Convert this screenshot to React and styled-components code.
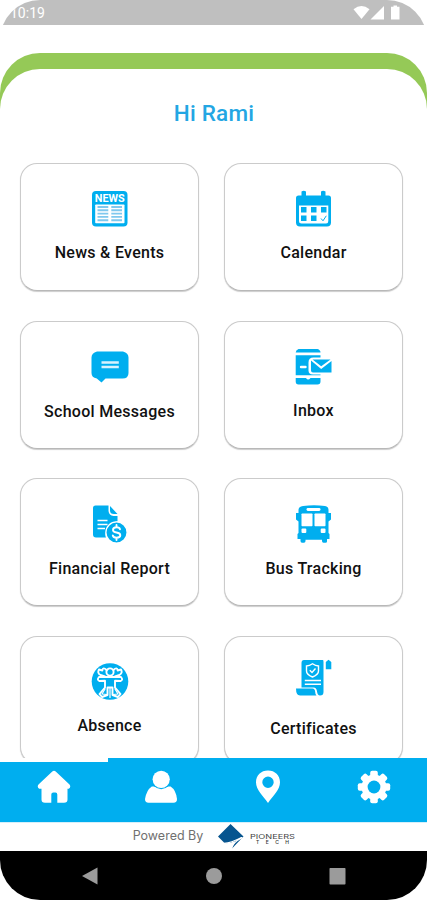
import styled, { createGlobalStyle } from "styled-components";

const blue = "#00aeef";

export default function App() {
  return (
    <>
      <GlobalStyle />
      <Phone>
        <StatusBar>
          <span>10:19</span>
          <StatusIcons />
        </StatusBar>
        <Backdrop>
          <Sheet>
            <Greeting>Hi Rami</Greeting>
            <Grid>
              {cards.map(({ label, Icon, iconTop, labelTop }) => (
                <Card key={label} $top={iconTop}>
                  <Icon />
                  <Label $top={labelTop}>{label}</Label>
                </Card>
              ))}
            </Grid>
          </Sheet>
        </Backdrop>
        <TabBar>
          <Tab $active><HomeIcon /></Tab>
          <Tab><UserIcon /></Tab>
          <Tab><PinIcon /></Tab>
          <Tab><GearIcon /></Tab>
        </TabBar>
        <Powered>
          <span>Powered By</span>
          <PioneersLogo />
        </Powered>
        <SystemBar>
          <SystemIcon viewBox="0 0 18 18"><path d="M1 9 16.5 0.5V17.5Z" /></SystemIcon>
          <SystemIcon viewBox="0 0 18 18"><circle cx="9" cy="9" r="8" /></SystemIcon>
          <SystemIcon viewBox="0 0 18 18"><rect x="0.5" y="1" width="16" height="16.5" rx="0.8" /></SystemIcon>
        </SystemBar>
      </Phone>
    </>
  );
}

const StatusIcons = () => (
  <svg width="48" height="16" viewBox="0 0 48 16" fill="#fff">
    <path d="M0.5 4.2Q8.500-2 16.500 4.200L8.500 14Z" />
    <path d="M17.500 14.500 31 1V14.500Z" />
    <path d="M38 1.800H40.500V0.500H44V1.800H46.500V14.500H38Z" />
  </svg>
);

// card icons share a 40x40 box

const NewsIcon = () => (
  <CardIcon viewBox="0 0 40 40">
    <rect x="2" y="2" width="35.500" height="35.500" rx="4" />
    <text x="4.800" y="13" textLength="30" lengthAdjust="spacingAndGlyphs" fill="#fff" fontFamily="Roboto, sans-serif" fontWeight="700" fontSize="11.500">NEWS</text>
    <rect x="5.200" y="15.500" width="29.300" height="18.800" rx="0.800" fill="#fff" />
    <path stroke="#7fc8ee" strokeWidth="1.900" d="M7.500 18H18.300M7.500 21.300H18.300M7.500 24.600H18.300M7.500 27.900H18.300M7.500 31.200H18.300M21.300 18H32M21.300 21.300H32M21.300 24.600H32M21.300 27.900H32M21.300 31.200H32" />
  </CardIcon>
);

const CalendarIcon = () => (
  <CardIcon viewBox="0 0 40 40">
    <path d="M7.500 2.500Q9.700 1 12 2.500V6.500H27V2.500Q29 1 31.500 2.500V6.500H34.500Q37 6.500 37 9V33.500Q37 37.500 33 37.500H6Q2 37.500 2 33.500V9Q2 6.500 4.500 6.500H7.500Z" />
    <path fill="#fff" d="M5 16.500H34.300V32Q34.300 34.500 32 34.500H7.500Q5 34.500 5 32Z" />
    <path d="M7 18h5.500v5.500h-5.500zM17 18h5.500v5.500h-5.500zM27 18h5.500v5.500h-5.500zM7 26.500h5.500v5.500h-5.500zM17 26.500h5.500v5.500h-5.500z" />
    <path fill="none" stroke={blue} strokeWidth="1" d="M27 29.500 29 31.800 32.300 26.800" />
  </CardIcon>
);

const MessageIcon = () => (
  <CardIcon viewBox="0 0 40 40">
    <path d="M7 4.500H33Q38.500 6 38.500 10.500V26Q38.500 31.500 32.500 31.500H15.500L11.500 35.500 6.800 31.500Q1.500 30.500 1.500 26V10.500Q1.500 6 7 4.500Z" />
    <path stroke="#d7f2fe" strokeWidth="2.600" d="M11.500 15.500H28.800M11.500 20H28.800" />
  </CardIcon>
);

const InboxIcon = () => (
  <CardIcon viewBox="0 0 40 40">
    <path d="M4.500 2H23.500Q26.500 3 26.500 5.500H1.700Q1.700 3 4.500 2ZM1.700 8.300H26.500V10.500H19.500Q14.500 10.500 14.500 15.500V23.500Q14.500 27.500 19 27.500H26.500V28.300H1.700ZM1.700 31H12Q14 34 16.500 31H26.500V34.500Q26.500 37.500 23.500 37.500H4.500Q1.700 37.500 1.700 34.500Z" />
    <path stroke="#fff" strokeWidth="2.400" strokeLinecap="round" d="M7 20H11.500" />
    <path d="M18.500 12.500H36.500L27.200 19.200ZM17 13.500 27.200 22 37.500 14V25.500H19Q17 25.500 17 23.500Z" />
  </CardIcon>
);

const FinanceIcon = () => (
  <CardIcon viewBox="0 0 40 40">
    <path d="M5.500 1.500H18.500V7Q19 11.500 23.500 12H27.500V17.200Q16.500 18.500 15.500 29.500 15.300 33.500 16.300 33.500H6Q3 33.500 3 30.500V4Q3 1.500 5.500 1.500ZM20 2 27.500 10H24Q20 10 20 6.500Z" />
    <path stroke="#fff" strokeWidth="1.400" d="M7.500 16.500H17.500M7.500 20.500H17.500M7.500 24.500H15" />
    <circle cx="26.500" cy="28.500" r="10.600" stroke="#fff" strokeWidth="1.300" />
    <path fill="none" stroke="#fff" strokeWidth="1.900" strokeLinecap="round" d="M30 25.300Q29.500 23.300 26.500 23.300 23 23.300 23 25.900 23 28 26.500 28.500 30.300 29 30.300 31.300 30.300 33.700 26.500 33.700 23.300 33.700 22.800 31.500M26.500 21V23.300M26.500 33.700V36" />
  </CardIcon>
);

const BusIcon = () => (
  <CardIcon viewBox="0 0 40 40">
    <path d="M9 2Q20 0.500 31 2 34.500 2.500 34.500 6V9H37V15.500L34.500 17.500V29L35.500 30V35H33V37.500Q33 38.700 31.500 38.700H29.500Q28 38.700 28 37V35.800H11.500V37Q11.500 38.700 10 38.700H8Q6.500 38.700 6.500 37V35H3.500V30L4.500 29V17.500L2 15.500V9H4.500V6Q4.500 2.500 9 2Z" />
    <g fill="#fff">
      <rect x="12.500" y="4" width="14" height="2.900" rx="1.400" />
      <rect x="7.500" y="9.500" width="11" height="12.800" rx="0.700" />
      <rect x="20.500" y="9.500" width="11" height="12.800" rx="0.700" />
      <rect x="7.500" y="24.500" width="4.800" height="4.500" rx="1" />
      <rect x="26.700" y="24.500" width="4.800" height="4.500" rx="1" />
    </g>
  </CardIcon>
);

const AbsenceIcon = () => (
  <CardIcon viewBox="0 0 40 40">
    <circle cx="20" cy="19.500" r="18.300" />
    <g fill="none" stroke="#fff" strokeWidth="1.900" strokeLinecap="round" strokeLinejoin="round">
      <circle cx="20" cy="10" r="3.600" />
      <path d="M16.500 8Q13 4.500 12.300 8.500L9 7.500Q7 11 10.500 13L15 14.500M23.500 8Q27 4.500 27.700 8.500L31 7.500Q33 11 29.500 13L25 14.500" />
      <path d="M9 15H31Q33.500 18 30.500 19L25 18.700V25.500L30.500 32 28 35 22.500 33V25.500H17.500V33L12 35 9.500 32 15 25.500V18.700L9.500 19Q6.500 18 9 15Z" />
      <path d="M15 27 12 32 17 32.500M25 27 28 32 23 32.500M20 25.500V35.500" strokeWidth="1.200" />
    </g>
  </CardIcon>
);

const CertificateIcon = () => (
  <CardIcon viewBox="0 0 40 40">
    <path d="M10 2H29.500V34Q29.500 37.500 26 37.500 23.500 37.500 23 33.500 22.500 29.500 19.500 29.500H7.500V5Q7.500 2 10 2ZM2 30.500H18.500Q21 30.500 21.200 34 21.200 36.500 22.500 37.500H6Q2 37.500 2 30.500ZM31.800 4 34.500 1.800 37.300 4V11.200H31.800Z" />
    <path fill="#fff" d="M29.500 2H31V3.200H29.500Z" />
    <g fill="none" stroke="#fff" strokeWidth="1.400">
      <path d="M18.500 5.800Q21.500 8 24.500 8V13Q24.500 16.500 18.500 19 12.500 16.500 12.500 13V8Q15.500 8 18.500 5.800Z" />
      <path d="M15.800 12.300 18 14.400 21.500 10.500" />
      <path d="M10.800 22.500H27M10.800 26.300H27" />
    </g>
  </CardIcon>
);

const HomeIcon = () => (
  <TabIcon viewBox="0 0 34 34">
    <path d="M15.300 1.500Q17 0.200 18.700 1.500L32.500 14.500Q34.300 17 31.800 18.800H30.500V29.500Q30.500 32.800 27 32.800H20.300V24.500Q20.300 22.500 18.500 22.500H16.300Q14.300 22.500 14.300 24.500V32.800H8Q4.500 32.800 4.500 29.500V18.800H2.200Q-0.300 17 1.500 14.500Z" />
  </TabIcon>
);

const UserIcon = () => (
  <TabIcon viewBox="0 0 34 34">
    <path d="M7.800 16.500H26.600Q32 20 33 29 33 32.800 29.500 32.800H4.500Q1 32.800 1 29 2.500 20 7.800 16.500Z" />
    <circle cx="17.200" cy="9.300" r="9.900" fill={blue} />
    <circle cx="17.200" cy="9.300" r="8.600" />
  </TabIcon>
);

const PinIcon = () => (
  <TabIcon viewBox="0 0 34 34">
    <path fillRule="evenodd" d="M17 0.600C24 0.600 29 5.500 29 12.300 29 20 22 26 17 33 12 26 5 20 5 12.300 5 5.500 10 0.600 17 0.600ZM17 6.600A5.700 5.700 0 1 0 17 18A5.700 5.700 0 1 0 17 6.600Z" />
  </TabIcon>
);

const GearIcon = () => (
  <TabIcon viewBox="0 0 34 34">
    {[0, 45, 90, 135].map((angle) => (
      <rect key={angle} x="13.200" y="0.800" width="7.600" height="32.400" rx="2" transform={`rotate(${angle} 17 17)`} />
    ))}
    <circle cx="17" cy="17" r="12.500" />
    <circle cx="17" cy="17" r="6.400" fill={blue} />
  </TabIcon>
);

const PioneersLogo = () => (
  <svg width="80" height="28" viewBox="0 0 80 28">
    <path fill="#07558f" d="M12.500 1 25.500 13.500 14 25.500 17.500 18 13 19.500 7 20.500 0 13.500Z" />
    <path fill="none" stroke="#fff" strokeWidth="1.300" d="M6 20.500Q13 20 23.500 14.500M13 26Q14.500 19.500 24.500 14.500" />
    <text x="32" y="15.500" textLength="45" lengthAdjust="spacingAndGlyphs" fontFamily="Inter, sans-serif" fontSize="6.500" fill="#444">PIONEERS</text>
    <text x="38" y="21" textLength="33" fontFamily="Inter, sans-serif" fontSize="5" fontWeight="500" fill="#333">TECH</text>
  </svg>
);

const cards = [
  { label: "News & Events", Icon: NewsIcon, iconTop: 25, labelTop: 14 },
  { label: "Calendar", Icon: CalendarIcon, iconTop: 25, labelTop: 14 },
  { label: "School Messages", Icon: MessageIcon, iconTop: 25, labelTop: 15 },
  { label: "Inbox", Icon: InboxIcon, iconTop: 25, labelTop: 14 },
  { label: "Financial Report", Icon: FinanceIcon, iconTop: 25, labelTop: 15 },
  { label: "Bus Tracking", Icon: BusIcon, iconTop: 25, labelTop: 15 },
  { label: "Absence", Icon: AbsenceIcon, iconTop: 25, labelTop: 14 },
  { label: "Certificates", Icon: CertificateIcon, iconTop: 21, labelTop: 21 }
];

const GlobalStyle = createGlobalStyle`
  * {
    box-sizing: border-box;
  }
  body {
    margin: 0;
    background: #fff;
    font-family: Roboto, sans-serif;
  }
  svg {
    display: block;
    flex-shrink: 0;
  }
`;

const Phone = styled.div`
  width: 427px;
  height: 900px;
  display: flex;
  flex-direction: column;
  overflow: hidden;
  border-radius: 40px;
  background: #fff;
`;

const StatusBar = styled.header`
  height: 25px;
  flex-shrink: 0;
  display: flex;
  justify-content: space-between;
  padding: 5px 26px 0 10px;
  background: #bfbfbf;
  color: #fff;
  font-size: 14px;
  line-height: 17px;
`;

const Backdrop = styled.main`
  height: 705px;
  flex-shrink: 0;
  margin-top: 28px;
  padding-top: 16px;
  overflow: hidden;
  border-radius: 40px 40px 0 0;
  background: #95c957;
`;

const Sheet = styled.section`
  height: 689px;
  padding: 30px 24px 0 20px;
  border-radius: 40px 40px 0 0;
  background: #fff;
`;

const Greeting = styled.h1`
  margin: 0 0 36px;
  padding-left: 5px;
  color: #23a6e3;
  font-size: 22.5px;
  font-weight: 500;
  line-height: 28px;
  letter-spacing: 0.2px;
  text-align: center;
`;

const Grid = styled.div`
  display: grid;
  grid-template-columns: 179px 179px;
  grid-auto-rows: 128px;
  gap: 29.5px 25px;
`;

const Card = styled.article`
  display: flex;
  flex-direction: column;
  align-items: center;
  padding-top: ${(props) => props.$top}px;
  border: 1px solid #cbcbcb;
  border-bottom-color: #b8b8b8;
  border-radius: 17px;
  background: #fff;
  box-shadow: 0 1px 1px rgba(0, 0, 0, 0.2);
`;

const CardIcon = styled.svg`
  width: 40px;
  height: 40px;
  fill: ${blue};
`;

const Label = styled.span`
  margin-top: ${(props) => props.$top}px;
  color: #111;
  font-size: 16px;
  font-weight: 500;
  line-height: 20px;
  letter-spacing: 0.28px;
  white-space: nowrap;
`;

const TabBar = styled.nav`
  height: 64px;
  flex-shrink: 0;
  display: grid;
  grid-template-columns: 108px 106px 107px 106px;
  background: ${blue};
`;

const Tab = styled.div`
  display: flex;
  justify-content: center;
  padding-top: ${(props) => (props.$active ? 8 : 12)}px;
  border-top: ${(props) => (props.$active ? "4px solid #fff" : "none")};
`;

const TabIcon = styled.svg`
  width: 34px;
  height: 34px;
  fill: #fff;
`;

const Powered = styled.div`
  height: 29px;
  flex-shrink: 0;
  display: flex;
  align-items: center;
  justify-content: center;
  gap: 15px;
  padding-left: 4px;
  border-top: 1px solid #d5effa;
  color: #707070;
  font-family: Inter, sans-serif;
  font-size: 12.5px;
  font-weight: 400;
  line-height: 16px;

  span {
    margin-top: -2px;
  }
`;

const SystemBar = styled.footer`
  height: 49px;
  flex-shrink: 0;
  display: flex;
  align-items: center;
  justify-content: center;
  gap: 106px;
  background: #000;
`;

const SystemIcon = styled.svg`
  width: 18px;
  height: 18px;
  fill: #9b9b9b;
`;
